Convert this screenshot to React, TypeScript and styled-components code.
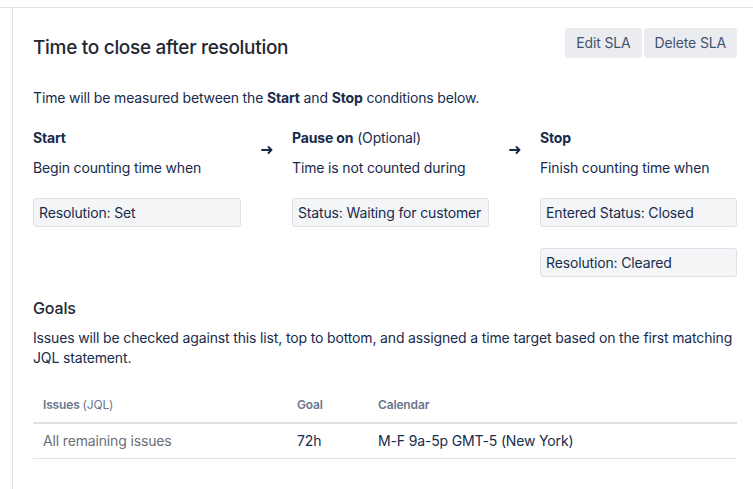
import React from "react";
import styled, { createGlobalStyle } from "styled-components";

const Global = createGlobalStyle`
  html, body { margin: 0; padding: 0; background: #fff; }
  body { font-family: Inter, "Noto Sans", sans-serif; color: #172B4D; letter-spacing: -0.15px; -webkit-font-smoothing: antialiased; }
  * { box-sizing: border-box; }
`;

const Page = styled.div`
  padding-top: 7px;
  width: 753px;
  height: 489px;
  overflow: hidden;
`;

const Frame = styled.div`
  border-top: 1px solid #DFE1E6;
  height: 100%;
`;

const Panel = styled.section`
  margin-left: 12px;
  border-left: 1px solid #DFE1E6;
  height: 100%;
  padding: 20px 16px 0 20px;
`;

const Header = styled.header`
  display: flex;
  justify-content: space-between;
  align-items: flex-start;
`;

const Title = styled.h1`
  margin: 8px 0 0;
  font-size: 19px;
  line-height: 24px;
  font-weight: 500;
  letter-spacing: -0.3px;
  color: #222831;
`;

const Actions = styled.div`
  display: flex;
  gap: 2px;
`;

const Button = styled.button`
  height: 30px;
  padding: 0 11px;
  border: none;
  border-radius: 3px;
  background: #EBECF0;
  color: #42526E;
  font-family: inherit;
  font-size: 14px;
  letter-spacing: -0.15px;
  line-height: 30px;
  cursor: pointer;
`;

const Text = styled.p<{ $mt?: number }>`
  margin: ${(p) => p.$mt ?? 0}px 0 0;
  font-size: 14px;
  line-height: 20px;
  color: #172B4D;
`;

const Flow = styled.div`
  display: grid;
  grid-template-columns: 208px 51px 197px 51px 197px;
  margin-top: 20px;
`;

const Column = styled.div`
  display: flex;
  flex-direction: column;
`;

const ColTitle = styled.div`
  font-size: 14px;
  line-height: 20px;
  font-weight: 700;
  color: #172B4D;
  span { font-weight: 400; }
`;

const Arrow = styled.div`
  padding-top: 18px;
  display: flex;
  justify-content: center;
  align-items: flex-start;
  color: #172B4D;
  svg { display: block; }
`;

const Conditions = styled.div`
  display: flex;
  flex-direction: column;
  gap: 21px;
  margin-top: 20px;
`;

const Condition = styled.div`
  height: 29px;
  border: 1px solid #DFE1E6;
  border-radius: 3px;
  background: #F4F5F7;
  padding: 0 5px;
  font-size: 14px;
  line-height: 27px;
  color: #172B4D;
  white-space: nowrap;
`;

const Subtitle = styled.h2`
  margin: 21px 0 0;
  font-size: 16px;
  line-height: 20px;
  font-weight: 500;
  color: #222831;
`;

const Table = styled.table`
  width: 100%;
  margin-top: 20px;
  border-collapse: collapse;
`;

const Th = styled.th<{ $w?: number }>`
  width: ${(p) => (p.$w ? `${p.$w}px` : "auto")};
  text-align: left;
  padding: 7px 10px;
  font-size: 12px;
  line-height: 20px;
  font-weight: 600;
  color: #6B778C;
  border-bottom: 2px solid #DFE1E6;
  span { font-weight: 400; }
`;

const Td = styled.td<{ $muted?: boolean }>`
  padding: 7px 10px;
  font-size: 14px;
  line-height: 20px;
  color: ${(p) => (p.$muted ? "#6B6F78" : "#172B4D")};
  border-bottom: 1px solid #DFE1E6;
`;

const ArrowIcon = () => (
  <svg width="12" height="8" viewBox="0 0 12 8" fill="none" stroke="currentColor" strokeWidth="1.8" strokeLinecap="round" strokeLinejoin="round">
    <path d="M1 4h9.5M7.5 1l3 3-3 3" />
  </svg>
);

const steps = [
  { title: "Start", extra: "", desc: "Begin counting time when", items: ["Resolution: Set"] },
  { title: "Pause on", extra: " (Optional)", desc: "Time is not counted during", items: ["Status: Waiting for customer"] },
  { title: "Stop", extra: "", desc: "Finish counting time when", items: ["Entered Status: Closed", "Resolution: Cleared"] },
];

export default function App() {
  return (
    <Page>
      <Global />
      <Frame>
        <Panel>
          <Header>
            <Title>Time to close after resolution</Title>
            <Actions>
              <Button>Edit SLA</Button>
              <Button>Delete SLA</Button>
            </Actions>
          </Header>
          <Text $mt={28}>
            Time will be measured between the <b>Start</b> and <b>Stop</b> conditions below.
          </Text>
          <Flow>
            {steps.map((s, i) => (
              <React.Fragment key={s.title}>
                {i > 0 && (
                  <Arrow>
                    <ArrowIcon />
                  </Arrow>
                )}
                <Column>
                  <ColTitle>
                    {s.title}
                    {s.extra && <span>{s.extra}</span>}
                  </ColTitle>
                  <Text $mt={10}>{s.desc}</Text>
                  <Conditions>
                    {s.items.map((it) => (
                      <Condition key={it}>{it}</Condition>
                    ))}
                  </Conditions>
                </Column>
              </React.Fragment>
            ))}
          </Flow>
          <Subtitle>Goals</Subtitle>
          <Text $mt={10}>
            Issues will be checked against this list, top to bottom, and assigned a time target based on the first matching JQL statement.
          </Text>
          <Table>
            <thead>
              <tr>
                <Th $w={254}>
                  Issues <span>(JQL)</span>
                </Th>
                <Th $w={81}>Goal</Th>
                <Th>Calendar</Th>
              </tr>
            </thead>
            <tbody>
              <tr>
                <Td $muted>All remaining issues</Td>
                <Td>72h</Td>
                <Td>M-F 9a-5p GMT-5 (New York)</Td>
              </tr>
            </tbody>
          </Table>
        </Panel>
      </Frame>
    </Page>
  );
}
